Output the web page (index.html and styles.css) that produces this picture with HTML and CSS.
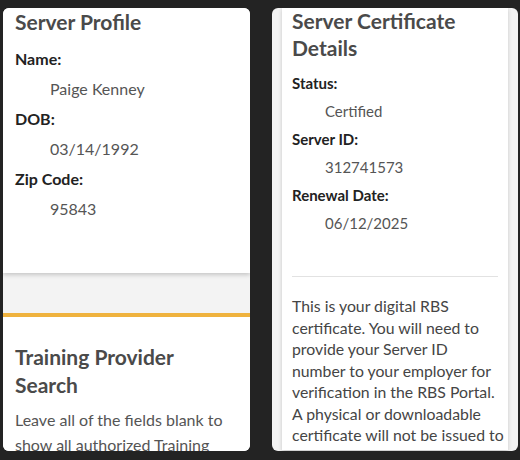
FILE: index.html
```html
<!DOCTYPE html>
<html>
<head>
    <title>Server Profile</title>
    <link rel="stylesheet" href="styles.css">
</head>
<body>
    <div class="screens">
        <div class="screen screen-left">
            <div class="card profile-card">
                <h2 class="card-title">Server Profile</h2>
                <div class="field-label">Name:</div>
                <div class="field-value">Paige Kenney</div>
                <div class="field-label">DOB:</div>
                <div class="field-value">03/14/1992</div>
                <div class="field-label">Zip Code:</div>
                <div class="field-value">95843</div>
            </div>
            <div class="search-section">
                <h2 class="section-title">Training Provider Search</h2>
                <p class="section-text">Leave all of the fields blank to show all authorized Training Providers.</p>
            </div>
        </div>
        <div class="screen screen-right">
            <div class="card cert-card">
                <h2 class="card-title cert-title">Server Certificate Details</h2>
                <div class="cert-fields">
                    <div class="field-label">Status:</div>
                    <div class="field-value">Certified</div>
                    <div class="field-label">Server ID:</div>
                    <div class="field-value">312741573</div>
                    <div class="field-label">Renewal Date:</div>
                    <div class="field-value">06/12/2025</div>
                </div>
                <hr class="divider">
                <p class="cert-text">This is your digital RBS<br>certificate. You will need to<br>provide your Server ID<br>number to your employer for<br>verification in the RBS Portal.<br>A physical or downloadable<br>certificate will not be issued to<br>you.</p>
            </div>
        </div>
    </div>
</body>
</html>
```
FILE: styles.css
```css
body {
    margin: 0;
    background-color: #232323;
    font-family: Lato, "Open Sans", sans-serif;
    height: 460px;
    overflow: hidden;
}

.screens {
    display: flex;
    gap: 22px;
    padding: 8px 2px 0 3px;
}

.screen {
    height: 443px;
    border-radius: 6px;
    overflow: hidden;
    background-color: #f3f3f3;
}

.screen-left {
    width: 247px;
}

.screen-right {
    width: 246px;
    padding: 0 10px;
    box-sizing: border-box;
}

.card {
    background-color: white;
    box-shadow: 0 2px 4px rgba(0, 0, 0, 0.18);
}

.profile-card {
    height: 265px;
    padding: 0 12px;
    box-sizing: border-box;
}

.card-title {
    margin: 0;
    font-size: 21px;
    font-weight: 700;
    color: #4a4a4a;
    line-height: 27px;
}

.field-label {
    font-size: 16px;
    font-weight: 700;
    color: #222;
    line-height: 30px;
}

.field-value {
    font-size: 16px;
    color: #555;
    line-height: 30px;
    padding-left: 35px;
}

.profile-card .card-title {
    margin-bottom: 9px;
}

.search-section {
    margin-top: 40px;
    border-top: 4px solid #efb23e;
    background-color: white;
    height: 200px;
    padding: 26px 12px 0;
}

.section-title {
    margin: 0 0 8px;
    font-size: 21px;
    font-weight: 700;
    color: #4a4a4a;
    line-height: 28px;
}

.section-text {
    margin: 0;
    font-size: 16px;
    color: #555;
    line-height: 25px;
}

.cert-card {
    height: 100%;
    padding: 0 2px 0 10px;
}

.cert-title {
    margin-top: -1px;
}

.cert-fields {
    margin-top: 8px;
}

.cert-fields .field-label {
    font-size: 15px;
    line-height: 28px;
}

.cert-fields .field-value {
    font-size: 15px;
    line-height: 28px;
    padding-left: 33px;
}

.divider {
    border: none;
    border-top: 1px solid #e2e2e2;
    margin: 39px 8px 18px 0;
}

.cert-text {
    margin: 0;
    font-size: 15.8px;
    color: #454545;
    line-height: 21.5px;
    white-space: nowrap;
}
```
